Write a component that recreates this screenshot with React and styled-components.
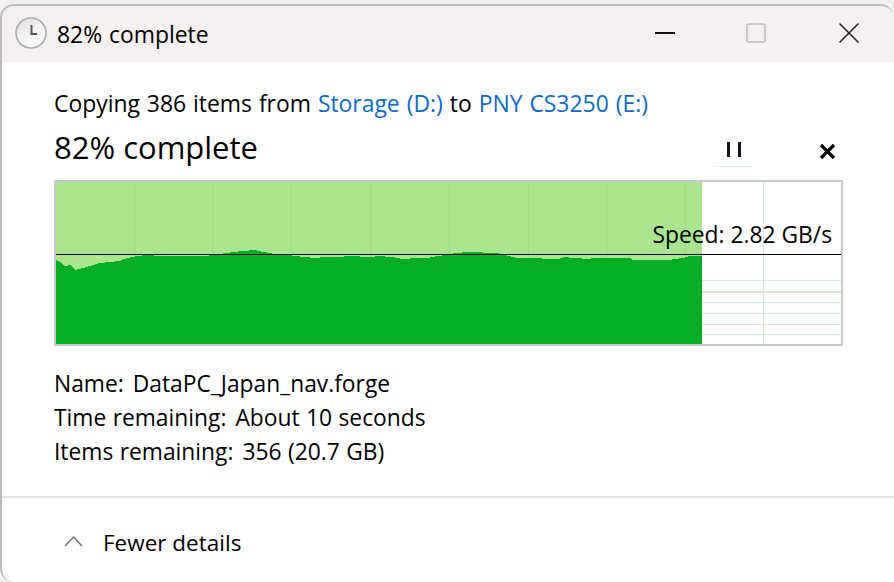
import React from "react";
import styled, { createGlobalStyle } from "styled-components";

const GlobalStyle = createGlobalStyle`
  html, body {
    margin: 0;
    padding: 0;
    background: #f1f1f1;
  }
  body {
    font-family: "Open Sans", "Noto Sans", "Liberation Sans", sans-serif;
    color: #000;
  }
`;

// [x, y] of the top of the filled area, in screenshot pixels
const PROFILE = [
  [56, 260], [60, 262], [65, 266], [70, 265], [75, 270], [83, 268], [90, 266],
  [100, 263], [120, 261], [127, 258], [137, 256], [147, 255], [160, 256],
  [170, 256], [207, 256], [210, 255], [227, 253], [233, 252], [243, 251],
  [255, 250], [263, 252], [270, 253], [273, 254], [290, 255], [293, 256],
  [307, 257], [313, 258], [327, 257], [340, 257], [347, 256], [373, 257],
  [377, 256], [393, 257], [402, 259], [417, 258], [427, 258], [437, 256],
  [447, 255], [455, 253], [468, 252], [497, 253], [505, 255], [517, 258],
  [540, 258], [543, 259], [558, 259], [565, 257], [573, 258], [590, 259],
  [592, 258], [630, 258], [632, 260], [668, 260], [683, 258], [690, 256],
  [702, 256],
];

const CHART_X = 56;
const CHART_Y = 182;
const areaPath =
  "M0 162 " +
  PROFILE.map(([x, y]) => `L${x - CHART_X} ${y - CHART_Y}`).join(" ") +
  " L646 162 Z";

const DONE_GRID = [134, 212, 291, 370, 449, 528, 606, 685];
const SPEED_ROWS = [280, 291, 302, 313, 324, 334];

const Window = styled.div`
  margin-top: 4px;
  height: 578px;
  box-sizing: border-box;
  background: #fff;
  border-top: 2px solid #bcbcbc;
  border-left: 2px solid #bcbcbc;
  border-top-left-radius: 14px;
  border-top-right-radius: 14px;
  border-bottom-left-radius: 14px;
  overflow: hidden;
  display: flex;
  flex-direction: column;
`;

const TitleBar = styled.div`
  height: 56px;
  flex: none;
  background: #f3f0ef;
  display: flex;
  align-items: center;
  padding-left: 13px;
`;

const TitleIcon = styled.svg`
  margin-top: -2px;
  flex: none;
`;

const TitleText = styled.div`
  margin: 2px 0 0 10px;
  font-size: 22.9px;
  word-spacing: 1px;
  line-height: 56px;
  flex: 1;
`;

const Controls = styled.div`
  display: flex;
  align-items: center;
  margin-bottom: 2px;
`;

const ControlSlot = styled.div`
  width: ${(p) => p.$width}px;
  display: flex;
  justify-content: center;
`;

const Content = styled.main`
  flex: 1;
  padding: 24px 51px 0 52px;
`;

const CopyLine = styled.div`
  font-size: 22.9px;
  word-spacing: 1px;
  line-height: 36px;
`;

const SourceLink = styled.span`
  color: #0b6bcb;
`;

const HeadingRow = styled.div`
  display: flex;
  align-items: center;
  justify-content: space-between;
  height: 52px;
  margin-bottom: 6px;
`;

const Heading = styled.h1`
  margin: -2px 0 0;
  font-size: 31px;
  font-weight: 400;
  line-height: 52px;
`;

const Actions = styled.div`
  display: flex;
  align-items: center;
  gap: 67px;
  margin: 6px 7px 0 0;
`;

const PauseButton = styled.div`
  width: 36px;
  height: 32px;
  display: flex;
  justify-content: center;
  align-items: center;
  gap: 8px;
  padding-bottom: 2px;
  border-bottom: 1px solid #d4f2f4;
  box-sizing: border-box;
`;

const PauseBar = styled.span`
  width: 3px;
  height: 15px;
  background: #14141e;
`;

const Chart = styled.div`
  position: relative;
  width: 789px;
  height: 166px;
  box-sizing: border-box;
  border: 2px solid #c9c9c9;
`;

const ChartDrawing = styled.svg`
  display: block;
`;

const SpeedLabel = styled.div`
  position: absolute;
  right: 9px;
  top: 35px;
  font-size: 22.8px;
  line-height: 36px;
`;

const Details = styled.div`
  margin-top: 21px;
  display: flex;
  flex-direction: column;
`;

const DetailRow = styled.div`
  display: flex;
  gap: 9px;
  font-size: 22.8px;
  word-spacing: 0.5px;
  line-height: 34px;
`;

const Footer = styled.footer`
  flex: none;
  height: 86px;
  box-sizing: border-box;
  border-top: 2px solid #e2e2e2;
  display: flex;
  align-items: center;
  gap: 20px;
  padding: 4px 0 0 62px;
  font-size: 22.5px;
`;

const ChevronIcon = styled.svg`
  margin-top: -3px;
  flex: none;
`;

function ClockIcon() {
  return (
    <TitleIcon width="32" height="32" viewBox="0 0 32 32">
      <defs>
        <linearGradient id="clockFace" x1="0.2" y1="0" x2="0.8" y2="1">
          <stop offset="0" stopColor="#dedede" />
          <stop offset="0.5" stopColor="#f4f4f4" />
          <stop offset="1" stopColor="#ffffff" />
        </linearGradient>
      </defs>
      <circle cx="16" cy="16" r="15" fill="url(#clockFace)" stroke="#aaa8b4" strokeWidth="1.6" />
      <path d="M16.5 8 V17 H22" fill="none" stroke="#55555c" strokeWidth="2" />
    </TitleIcon>
  );
}

function Chevron() {
  return (
    <ChevronIcon width="19" height="12" viewBox="0 0 19 12">
      <path d="M1 11 L9.5 2 L18 11" fill="none" stroke="#6f6f6f" strokeWidth="1.4" />
    </ChevronIcon>
  );
}

function SpeedChart() {
  return (
    <ChartDrawing width="785" height="162" viewBox="0 0 785 162">
      <rect x="0" y="0" width="646" height="162" fill="#a9e68f" />
      {DONE_GRID.map((x) => (
        <rect key={x} x={x - CHART_X} y="0" width="1" height="162" fill="#98de80" />
      ))}
      <rect x={763 - CHART_X} y="0" width="1" height="162" fill="#d3ebd8" />
      {SPEED_ROWS.map((y) => (
        <rect key={y} x="646" y={y - CHART_Y} width="139" height="1" fill="#d3ebd8" />
      ))}
      <rect x="646" y={291 - CHART_Y} width="139" height="2" fill="#d3ebd8" />
      <path d={areaPath} fill="#05ae25" shapeRendering="crispEdges" />
      <rect x="0" y={254 - CHART_Y} width="785" height="1" fill="#000" />
    </ChartDrawing>
  );
}

export default function App() {
  return (
    <>
      <GlobalStyle />
      <Window>
        <TitleBar>
          <ClockIcon />
          <TitleText>82% complete</TitleText>
          <Controls>
            <ControlSlot $width={86}>
              <svg width="20" height="2" viewBox="0 0 20 2">
                <rect width="20" height="2" fill="#111" />
              </svg>
            </ControlSlot>
            <ControlSlot $width={96}>
              <svg width="20" height="20" viewBox="0 0 20 20">
                <rect x="1" y="1" width="18" height="18" rx="2" fill="none" stroke="#bdbdbd" strokeWidth="1.6" />
              </svg>
            </ControlSlot>
            <ControlSlot $width={90}>
              <svg width="20" height="20" viewBox="0 0 20 20">
                <path d="M0.5 0.5 L19.5 19.5 M19.5 0.5 L0.5 19.5" stroke="#222" strokeWidth="1.5" />
              </svg>
            </ControlSlot>
          </Controls>
        </TitleBar>
        <Content>
          <CopyLine>
            Copying 386 items from <SourceLink>Storage (D:)</SourceLink> to{" "}
            <SourceLink>PNY CS3250 (E:)</SourceLink>
          </CopyLine>
          <HeadingRow>
            <Heading>82% complete</Heading>
            <Actions>
              <PauseButton>
                <PauseBar />
                <PauseBar />
              </PauseButton>
              <svg width="17" height="17" viewBox="0 0 17 17">
                <path d="M2 2 L15 15 M15 2 L2 15" stroke="#000" strokeWidth="3.2" />
              </svg>
            </Actions>
          </HeadingRow>
          <Chart>
            <SpeedChart />
            <SpeedLabel>Speed: 2.82 GB/s</SpeedLabel>
          </Chart>
          <Details>
            <DetailRow>
              <span>Name:</span>
              <span>DataPC_Japan_nav.forge</span>
            </DetailRow>
            <DetailRow>
              <span>Time remaining:</span>
              <span>About 10 seconds</span>
            </DetailRow>
            <DetailRow>
              <span>Items remaining:</span>
              <span>356 (20.7 GB)</span>
            </DetailRow>
          </Details>
        </Content>
        <Footer>
          <Chevron />
          <span>Fewer details</span>
        </Footer>
      </Window>
    </>
  );
}
